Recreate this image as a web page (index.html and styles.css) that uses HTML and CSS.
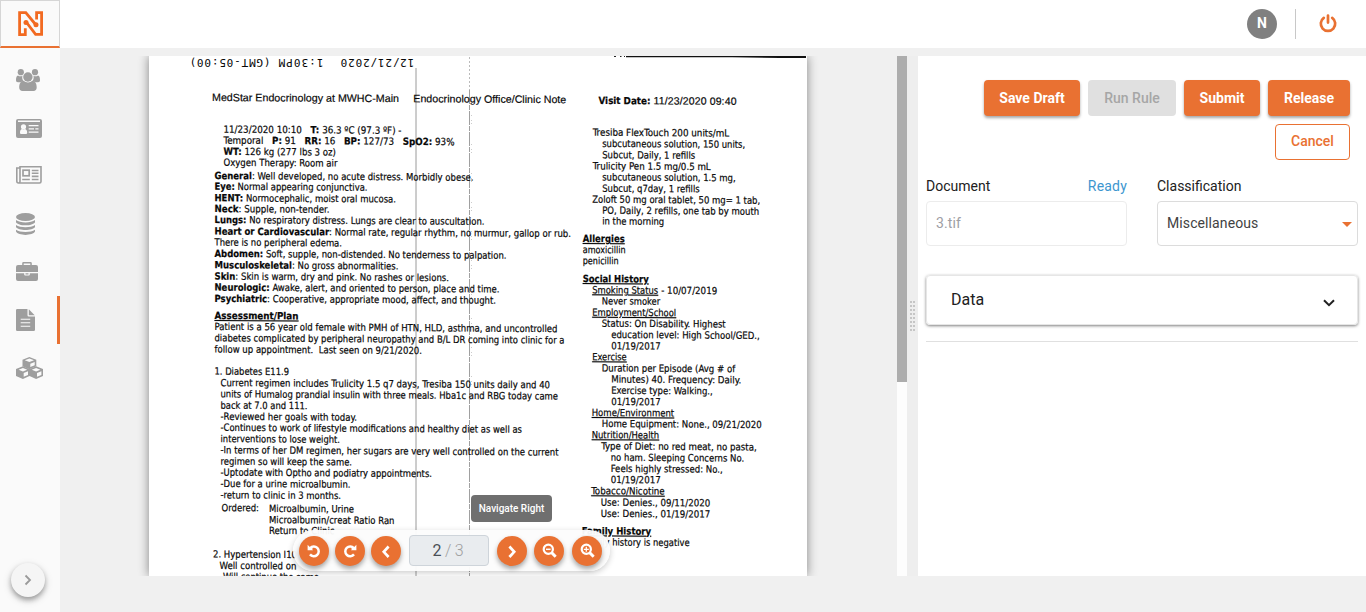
FILE: index.html
```html
<!DOCTYPE html>
<html lang="en">
<head>
<meta charset="utf-8">
<title>Document review</title>
<link rel="stylesheet" href="styles.css">
</head>
<body>
<div class="app">
  <nav class="sidebar">
    <a class="logo">
      <svg width="26" height="26" viewBox="0 0 26 26" fill="none" stroke="#f26a21" stroke-width="2.800">
        <path d="M7.800 10.500 17.600 23.400H23.600V1.600H18.600V8.400M7.300 17.200V23.600H1.600V1.600H7.800L18 14"/>
        <circle cx="8" cy="11.500" r="2.500" fill="#f26a21" stroke="none"/>
        <circle cx="18" cy="13.800" r="2.500" fill="#f26a21" stroke="none"/>
      </svg>
    </a>
    <a class="nav-item">
      <svg width="24" height="22" viewBox="0 0 24 22" fill="#9e9e9e">
        <circle cx="4.800" cy="3.200" r="3.100"/><circle cx="19" cy="3.200" r="3.100"/>
        <path d="M2 6.500C3.500 7.600 5 7.600 6.400 6.800 5.900 9.200 6.500 11 7.700 12.400 6.200 12.500 5.200 12.900 4.400 13.200H2C.6 13.200 0 12.400 0 11.200 0 9 .5 6.500 2 6.500ZM22 6.500C20.500 7.600 19 7.600 17.500 6.800 18 9.200 17.400 11 16.200 12.400 17.700 12.500 18.700 12.900 19.500 13.200H22C23.400 13.200 24 12.400 24 11.200 24 9 23.500 6.500 22 6.500Z"/>
        <circle cx="11.900" cy="8" r="4.700"/>
        <path d="M7.700 11.800C10.200 14 13.800 14 16.200 11.800 19.500 12 20.700 15 20.700 18.600 20.700 20.800 19.400 22 17.500 22H6.500C4.500 22 3.200 20.800 3.200 18.600 3.200 15 4.500 12 7.700 11.800Z"/>
      </svg>
    </a>
    <a class="nav-item">
      <svg width="26" height="19" viewBox="0 0 26 19">
        <rect width="26" height="19" rx="2" fill="#9e9e9e"/>
        <path d="M2 1.500H24V3H2ZM4 13.500C4 11 5 10.200 6.200 10 7 10.600 8 10.600 8.800 10 10 10.200 11.200 11 11.200 13.500 11.200 14.700 10.500 15 9.500 15H5.500C4.500 15 4 14.700 4 13.500ZM12.700 6H22.500V7.200H12.700ZM12.700 9.300H18V10.500H12.700ZM19.300 9.300H22.500V10.500H19.300ZM12.700 12.600H22.500V13.800H12.700Z" fill="#fafafa"/>
        <circle cx="7.500" cy="7.800" r="2.600" fill="#fafafa"/>
      </svg>
    </a>
    <a class="nav-item news">
      <svg width="26" height="18" viewBox="0 0 26 18" fill="none" stroke="#9e9e9e" stroke-width="1.600">
        <path d="M4 2H.8V15C.8 16.500 1.600 17 2.500 17 3.500 17 4 16.400 4 15.500V.8H25V15.500C25 16.500 24.300 17 23.500 17H2.500"/>
        <rect x="7" y="4.200" width="6.200" height="5.600" stroke-width="1.700"/>
        <path d="M15.800 4.500H22.500M15.800 7.300H22.500M15.800 10.400H22.500M6.200 13.500H13.800M15.800 13.500H22.500"/>
      </svg>
    </a>
    <a class="nav-item">
      <svg width="19" height="22" viewBox="0 0 19 22" fill="#9e9e9e">
        <ellipse cx="9.500" cy="4" rx="9.500" ry="4"/>
        <path d="M0 7C4 10.200 15 10.200 19 7V9.200C17 13.300 2 13.300 0 9.200ZM0 12C4 15 15 15 19 12V14C17 18 2 18 0 14ZM0 16.800C4 19.800 15 19.800 19 16.800V18.600C17 23 2 23 0 18.600Z"/>
      </svg>
    </a>
    <a class="nav-item case">
      <svg width="22" height="19" viewBox="0 0 22 19" fill="#9e9e9e">
        <path d="M6.200 3V1.300Q6.200 0 7.500 0H14.500Q15.800 0 15.800 1.300V3H20Q22 3 22 5V10H0V5Q0 3 2 3ZM7.700 3H14.300V1.500H7.700ZM0 11.300H8.200V12.500Q8.200 13.500 9.200 13.500H12.800Q13.800 13.500 13.800 12.500V11.300H22V17Q22 19 20 19H2Q0 19 0 17ZM9.500 11.300H12.500V12.400H9.500Z" fill-rule="evenodd"/>
      </svg>
    </a>
    <a class="nav-item active">
      <svg width="19" height="22" viewBox="0 0 19 22">
        <path d="M1.300 0H11.500V6.200Q11.500 7.500 12.800 7.500H19V20.700Q19 22 17.700 22H1.300Q0 22 0 20.700V1.300Q0 0 1.300 0ZM12.800 .3 18.700 6.200H12.800Z" fill="#9e9e9e"/>
        <path d="M4.700 10.200H14.200M4.700 13.800H14.200M4.700 17.300H14.200" stroke="#fafafa" stroke-width="1.100"/>
      </svg>
    </a>
    <a class="nav-item">
      <svg width="27" height="22" viewBox="0 0 27 22" fill="#9e9e9e">
        <path d="M13.400 0 20.300 2.700V9.200L13.400 12.200 6.500 9.200V2.700Z"/>
        <path d="M6.900 9.300 13.500 12V19L6.900 22 0 19V12ZM20.100 9.300 27 12V19L20.100 22 13.500 19V12Z"/>
        <path d="M13.400 1.500 18 3.300 13.400 5 8.800 3.300ZM14.300 6.700 18.700 5V8.200L14.300 10ZM6.900 11 11.200 12.700 6.900 14.500 2.600 12.700ZM7.700 16 12 14.300V17.900L7.700 19.800ZM20.100 11 24.400 12.700 20.100 14.500 15.800 12.700ZM21 16 25.400 14.300V17.900L21 19.800Z" fill="#fafafa"/>
      </svg>
    </a>
    <button class="expand">
      <svg width="8" height="12" viewBox="0 0 8 12" fill="none" stroke="#9a9a9a" stroke-width="1.800"><path d="M1.500 1.500 6 6 1.500 10.500"/></svg>
    </button>
  </nav>

  <div class="main">
    <header class="topbar">
      <span class="avatar">N</span>
      <span class="divider"></span>
      <svg class="power" width="18" height="19" viewBox="0 0 18 19" fill="none" stroke="#e97132" stroke-width="2.700" stroke-linecap="round">
        <path d="M9 1.500V8.600M4.800 3.900A7.200 7.200 0 1 0 13.200 3.900"/>
      </svg>
    </header>

    <div class="workspace">
      <section class="viewer">
        <svg class="scan" width="658" height="520" viewBox="149 56 658 520">
          <path d="M614 56.500h2M620 56.500h1.500M624 56.500h1" stroke="#222"/>
          <path d="M626 56H806V58H780L732 57.300H626Z" fill="#111"/>
          <path d="M416 68V576" stroke="#9a9a9a"/>
          <path d="M469.500 57V90" stroke="#bbb" stroke-dasharray="2 2"/>
          <path d="M469.500 90V576" stroke="#a0a0a0" stroke-dasharray="14 1 5 1"/>
          <path d="M471.500 115V400" stroke="#ccc" stroke-dasharray="1 4 1 2 1 20"/>

          <g class="fax">
            <text transform="translate(414.300 59.300) rotate(180)" textLength="73.600">12/21/2020</text>
            <text transform="translate(323.500 59) rotate(180)" textLength="45">1:30PM</text>
            <text transform="translate(270.500 58.700) rotate(180)" textLength="81">(GMT-05:00)</text>
          </g>

          <g class="head" transform="translate(212 -.5) skewY(.35)">
            <text x="0" y="101.500" textLength="187">MedStar Endocrinology at MWHC-Main</text>
            <text x="201.300" y="101.500" textLength="153">Endocrinology Office/Clinic Note</text>
          </g>
          <g class="note" transform="translate(598.500 0) skewY(.35)">
            <text x="0" y="104" class="b" textLength="52" lengthAdjust="spacingAndGlyphs">Visit Date:</text>
            <text x="55" y="104" class="arial" textLength="83">11/23/2020 09:40</text>
          </g>

          <g class="note" transform="translate(214.500 -.4) skewY(.38)">
            <text x="9" y="133" textLength="178" lengthAdjust="spacingAndGlyphs">11/23/2020 10:10 &#160;<tspan class="b"> T:</tspan> 36.3 ºC (97.3 ºF) -</text>
            <text x="9" y="144" textLength="231" lengthAdjust="spacingAndGlyphs">Temporal &#160;<tspan class="b"> P:</tspan> 91 &#160;<tspan class="b"> RR:</tspan> 16 &#160;<tspan class="b"> BP:</tspan> 127/73 &#160;<tspan class="b"> SpO2:</tspan> 93%</text>
            <text x="9" y="155.200" textLength="112.500" lengthAdjust="spacingAndGlyphs"><tspan class="b">WT:</tspan> 126 kg (277 lbs 3 oz)</text>
            <text x="9" y="166.200" textLength="114" lengthAdjust="spacingAndGlyphs">Oxygen Therapy: Room air</text>
            <text x="0" y="179.500" textLength="259" lengthAdjust="spacingAndGlyphs"><tspan class="b">General</tspan>: Well developed, no acute distress. Morbidly obese.</text>
            <text x="0" y="190.200" textLength="153" lengthAdjust="spacingAndGlyphs"><tspan class="b">Eye:</tspan> Normal appearing conjunctiva.</text>
            <text x="0" y="201.700" textLength="181.500" lengthAdjust="spacingAndGlyphs"><tspan class="b">HENT:</tspan> Normocephalic, moist oral mucosa.</text>
            <text x="0" y="212.500" textLength="115" lengthAdjust="spacingAndGlyphs"><tspan class="b">Neck</tspan>: Supple, non-tender.</text>
            <text x="0" y="223.500" textLength="270" lengthAdjust="spacingAndGlyphs"><tspan class="b">Lungs:</tspan> No respiratory distress. Lungs are clear to auscultation.</text>
            <text x="0" y="235" textLength="356.500" lengthAdjust="spacingAndGlyphs"><tspan class="b">Heart or Cardiovascular</tspan>: Normal rate, regular rhythm, no murmur, gallop or rub.</text>
            <text x="0" y="246" textLength="127.500" lengthAdjust="spacingAndGlyphs">There is no peripheral edema.</text>
            <text x="0" y="257.300" textLength="292" lengthAdjust="spacingAndGlyphs"><tspan class="b">Abdomen:</tspan> Soft, supple, non-distended. No tenderness to palpation.</text>
            <text x="0" y="268.700" textLength="184" lengthAdjust="spacingAndGlyphs"><tspan class="b">Musculoskeletal</tspan>: No gross abnormalities.</text>
            <text x="0" y="280" textLength="234.500" lengthAdjust="spacingAndGlyphs"><tspan class="b">Skin</tspan>: Skin is warm, dry and pink. No rashes or lesions.</text>
            <text x="0" y="291" textLength="285" lengthAdjust="spacingAndGlyphs"><tspan class="b">Neurologic:</tspan> Awake, alert, and oriented to person, place and time.</text>
            <text x="0" y="302.300" textLength="281.500" lengthAdjust="spacingAndGlyphs"><tspan class="b">Psychiatric</tspan>: Cooperative, appropriate mood, affect, and thought.</text>
            <text x="0" y="319.300" class="b u" textLength="84" lengthAdjust="spacingAndGlyphs">Assessment/Plan</text>
            <text x="0" y="330.300" textLength="343" lengthAdjust="spacingAndGlyphs">Patient is a 56 year old female with PMH of HTN, HLD, asthma, and uncontrolled</text>
            <text x="0" y="341.700" textLength="350" lengthAdjust="spacingAndGlyphs">diabetes complicated by peripheral neuropathy and B/L DR coming into clinic for a</text>
            <text x="0" y="353" textLength="207.500" lengthAdjust="spacingAndGlyphs">follow up appointment. &#160;Last seen on 9/21/2020.</text>
            <text x="0" y="375" textLength="74.500" lengthAdjust="spacingAndGlyphs">1. Diabetes E11.9</text>
            <text x="6" y="386.500" textLength="329.500" lengthAdjust="spacingAndGlyphs">Current regimen includes Trulicity 1.5 q7 days, Tresiba 150 units daily and 40</text>
            <text x="6" y="397.700" textLength="337.500" lengthAdjust="spacingAndGlyphs">units of Humalog prandial insulin with three meals. Hba1c and RBG today came</text>
            <text x="6" y="409" textLength="87" lengthAdjust="spacingAndGlyphs">back at 7.0 and 111.</text>
            <text x="6" y="420.200" textLength="136.500" lengthAdjust="spacingAndGlyphs">-Reviewed her goals with today.</text>
            <text x="6" y="431.200" textLength="301.500" lengthAdjust="spacingAndGlyphs">-Continues to work of lifestyle modifications and healthy diet as well as</text>
            <text x="6" y="442.500" textLength="119.500" lengthAdjust="spacingAndGlyphs">interventions to lose weight.</text>
            <text x="6" y="453.700" textLength="338" lengthAdjust="spacingAndGlyphs">-In terms of her DM regimen, her sugars are very well controlled on the current</text>
            <text x="6" y="465" textLength="131.500" lengthAdjust="spacingAndGlyphs">regimen so will keep the same.</text>
            <text x="6" y="476" textLength="211.500" lengthAdjust="spacingAndGlyphs">-Uptodate with Optho and podiatry appointments.</text>
            <text x="6" y="487.300" textLength="130" lengthAdjust="spacingAndGlyphs">-Due for a urine microalbumin.</text>
            <text x="6" y="498.700" textLength="120.500" lengthAdjust="spacingAndGlyphs">-return to clinic in 3 months.</text>
            <text x="7" y="511.500" textLength="37.500" lengthAdjust="spacingAndGlyphs">Ordered:</text>
            <text x="54.500" y="512" textLength="85" lengthAdjust="spacingAndGlyphs">Microalbumin, Urine</text>
            <text x="54.500" y="523.200" textLength="125.500" lengthAdjust="spacingAndGlyphs">Microalbumin/creat Ratio Ran</text>
            <text x="54.500" y="534" textLength="65.500" lengthAdjust="spacingAndGlyphs">Return to Clinic</text>
            <text x="-1.500" y="558" textLength="84" lengthAdjust="spacingAndGlyphs">2. Hypertension I10</text>
            <text x="5" y="569.300" textLength="77" lengthAdjust="spacingAndGlyphs">Well controlled on</text>
            <text x="8.500" y="580.300" textLength="96" lengthAdjust="spacingAndGlyphs">Will continue the same</text>
          </g>

          <g class="note" transform="translate(582.700 -.4) skewY(.38)">
            <text x="10" y="136" textLength="136.500" lengthAdjust="spacingAndGlyphs">Tresiba FlexTouch 200 units/mL</text>
            <text x="19.500" y="147.200" textLength="143" lengthAdjust="spacingAndGlyphs">subcutaneous solution, 150 units,</text>
            <text x="19.500" y="158.500" textLength="93" lengthAdjust="spacingAndGlyphs">Subcut, Daily, 1 refills</text>
            <text x="10" y="169.700" textLength="118" lengthAdjust="spacingAndGlyphs">Trulicity Pen 1.5 mg/0.5 mL</text>
            <text x="19.500" y="180.700" textLength="133.500" lengthAdjust="spacingAndGlyphs">subcutaneous solution, 1.5 mg,</text>
            <text x="19.500" y="192" textLength="97.500" lengthAdjust="spacingAndGlyphs">Subcut, q7day, 1 refills</text>
            <text x="9.500" y="203" textLength="168" lengthAdjust="spacingAndGlyphs">Zoloft 50 mg oral tablet, 50 mg= 1 tab,</text>
            <text x="19.500" y="214" textLength="157" lengthAdjust="spacingAndGlyphs">PO, Daily, 2 refills, one tab by mouth</text>
            <text x="19.500" y="224.800" textLength="62" lengthAdjust="spacingAndGlyphs">in the morning</text>
            <text x="0" y="242.300" class="b u" textLength="42" lengthAdjust="spacingAndGlyphs">Allergies</text>
            <text x="0" y="253.500" textLength="43" lengthAdjust="spacingAndGlyphs">amoxicillin</text>
            <text x="0" y="264.500" textLength="36" lengthAdjust="spacingAndGlyphs">penicillin</text>
            <text x="0" y="282.500" class="b u" textLength="66" lengthAdjust="spacingAndGlyphs">Social History</text>
            <text x="9.500" y="293.700" class="u" textLength="66" lengthAdjust="spacingAndGlyphs">Smoking Status</text>
            <text x="78.500" y="293.700" textLength="56" lengthAdjust="spacingAndGlyphs">- 10/07/2019</text>
            <text x="19" y="304.700" textLength="58.500" lengthAdjust="spacingAndGlyphs">Never smoker</text>
            <text x="9.500" y="316" class="u" textLength="84" lengthAdjust="spacingAndGlyphs">Employment/School</text>
            <text x="19" y="327" textLength="124" lengthAdjust="spacingAndGlyphs">Status: On Disability. Highest</text>
            <text x="28.500" y="338.200" textLength="148.500" lengthAdjust="spacingAndGlyphs">education level: High School/GED.,</text>
            <text x="28.500" y="349.500" textLength="49.500" lengthAdjust="spacingAndGlyphs">01/19/2017</text>
            <text x="9.500" y="360.500" class="u" textLength="34.500" lengthAdjust="spacingAndGlyphs">Exercise</text>
            <text x="19" y="371.700" textLength="133.500" lengthAdjust="spacingAndGlyphs">Duration per Episode (Avg # of</text>
            <text x="28.500" y="382.800" textLength="130" lengthAdjust="spacingAndGlyphs">Minutes) 40. Frequency: Daily.</text>
            <text x="28.500" y="394" textLength="101.500" lengthAdjust="spacingAndGlyphs">Exercise type: Walking.,</text>
            <text x="28.500" y="405.200" textLength="49.500" lengthAdjust="spacingAndGlyphs">01/19/2017</text>
            <text x="9" y="416.300" class="u" textLength="82.500" lengthAdjust="spacingAndGlyphs">Home/Environment</text>
            <text x="19" y="427.300" textLength="160" lengthAdjust="spacingAndGlyphs">Home Equipment: None., 09/21/2020</text>
            <text x="9" y="438.500" class="u" textLength="67.500" lengthAdjust="spacingAndGlyphs">Nutrition/Health</text>
            <text x="18.500" y="449.700" textLength="155.500" lengthAdjust="spacingAndGlyphs">Type of Diet: no red meat, no pasta,</text>
            <text x="28" y="461" textLength="133.500" lengthAdjust="spacingAndGlyphs">no ham. Sleeping Concerns No.</text>
            <text x="28" y="472.200" textLength="112" lengthAdjust="spacingAndGlyphs">Feels highly stressed: No.,</text>
            <text x="28" y="483.300" textLength="50" lengthAdjust="spacingAndGlyphs">01/19/2017</text>
            <text x="8.500" y="494.500" class="u" textLength="73.500" lengthAdjust="spacingAndGlyphs">Tobacco/Nicotine</text>
            <text x="18" y="506" textLength="109.500" lengthAdjust="spacingAndGlyphs">Use: Denies., 09/11/2020</text>
            <text x="18" y="517.200" textLength="109.500" lengthAdjust="spacingAndGlyphs">Use: Denies., 01/19/2017</text>
            <text x="-1" y="534.700" class="b u" textLength="69.500" lengthAdjust="spacingAndGlyphs">Family History</text>
            <text x="0" y="545.800" textLength="107" lengthAdjust="spacingAndGlyphs">Family history is negative</text>
          </g>
        </svg>

        <div class="toolbar">
          <button class="round"><svg width="14" height="14" viewBox="0 0 14 14" fill="none" stroke="#fff" stroke-width="2.500"><path d="M2.800 4.300H5.500M3.200 4A4.900 4.900 0 1 1 3 10.400"/><path d="M.6 .8V6.200H6Z" fill="#fff" stroke="none"/></svg></button>
          <button class="round"><svg width="14" height="14" viewBox="0 0 14 14" fill="none" stroke="#fff" stroke-width="2.500"><path d="M11.200 4.300H8.500M10.800 4A4.900 4.900 0 1 0 11 10.400"/><path d="M13.400 .8V6.200H8Z" fill="#fff" stroke="none"/></svg></button>
          <button class="round"><svg width="10" height="14" viewBox="0 0 10 14" fill="none" stroke="#fff" stroke-width="2.700"><path d="M7.600 2.500 2.800 7.800 7.600 13"/></svg></button>
          <div class="pager"><span class="current">2</span> / 3</div>
          <button class="round"><svg width="10" height="14" viewBox="0 0 10 14" fill="none" stroke="#fff" stroke-width="2.700"><path d="M2.400 2.500 7.200 7.800 2.400 13"/></svg><span class="tooltip">Navigate Right</span></button>
          <button class="round zoom-out"><svg width="15" height="15" viewBox="0 0 15 15" fill="none" stroke="#fff"><circle cx="6.300" cy="6.300" r="4.600" stroke-width="2.200"/><path d="M9.600 9.600 13.700 13.700" stroke-width="2.900"/><path d="M4 6.300H8.600" stroke-width="1.500"/></svg></button>
          <button class="round zoom-in"><svg width="15" height="15" viewBox="0 0 15 15" fill="none" stroke="#fff"><circle cx="6.300" cy="6.300" r="4.600" stroke-width="2.200"/><path d="M9.600 9.600 13.700 13.700" stroke-width="2.900"/><path d="M3.800 6.300H8.800M6.300 3.800V8.800" stroke-width="1.300"/></svg></button>
        </div>
      </section>

      <div class="scrollbar"><div class="thumb"></div></div>
      <div class="gutter"><div class="grip"></div></div>

      <section class="panel">
        <div class="actions">
          <button class="btn save">Save Draft</button>
          <button class="btn run" disabled>Run Rule</button>
          <button class="btn submit">Submit</button>
          <button class="btn release">Release</button>
          <button class="btn cancel">Cancel</button>
        </div>
        <div class="fields">
          <div class="field">
            <div class="label doc"><span>Document</span><span class="ready">Ready</span></div>
            <div class="box disabled">3.tif</div>
          </div>
          <div class="field">
            <div class="label">Classification</div>
            <div class="box select">Miscellaneous<i class="caret"></i></div>
          </div>
        </div>
        <div class="accordion">
          <span>Data</span>
          <svg width="12" height="8" viewBox="0 0 12 8" fill="none" stroke="#212121" stroke-width="2"><path d="M1 1.200 6 6.200 11 1.200"/></svg>
        </div>
        <div class="rule"></div>
      </section>
    </div>
  </div>
</div>
</body>
</html>
```
FILE: styles.css
```css
* { box-sizing: border-box; }
body { margin: 0; font-family: Roboto, "Liberation Sans", sans-serif; background: #f0f0f0; color: #212121; }
button { font: inherit; border: 0; padding: 0; }

.app { display: flex; height: 612px; overflow: hidden; }

.sidebar { display: flex; flex-direction: column; width: 60px; background: #fafafa; }
.logo { display: flex; align-items: center; justify-content: center; height: 48px; flex: none; border: 1px solid #d6d6d6; border-bottom: 2px solid #e97132; padding: 1px 0 0 1px; margin-bottom: 8px; }
.nav-item { display: flex; align-items: center; height: 48px; flex: none; padding-left: 16px; }
.nav-item.active { border-right: 3px solid #e97132; }
.nav-item.news, .nav-item.case { padding-bottom: 2px; }
.nav-item svg { display: block; }
.expand { display: flex; align-items: center; justify-content: center; width: 34px; height: 34px; margin: auto 0 15px 11px; border-radius: 50%; background: #f5f5f5; box-shadow: 0 3px 5px rgba(0,0,0,.3), 0 3px 10px rgba(0,0,0,.14); }

.main { flex: 1; display: flex; flex-direction: column; min-width: 0; }
.topbar { display: flex; align-items: center; justify-content: flex-end; height: 48px; background: #fff; padding-right: 29px; }
.avatar { width: 30px; height: 30px; border-radius: 50%; background: #808080; color: #fff; font-size: 14px; font-weight: 700; line-height: 29px; text-align: center; }
.divider { width: 1px; height: 30px; background: #c8c8c8; margin: 0 23px 0 18px; }
.power { margin-bottom: 1px; }

.workspace { display: flex; height: 520px; margin-top: 8px; }
.viewer { position: relative; width: 837px; overflow: hidden; display: flex; padding-left: 89px; }
.scan { display: block; flex: none; background: #fff; box-shadow: 0 0 10px rgba(0,0,0,.45); }
.scan text { white-space: pre; fill: #080808; }
.fax { font: 11px "DejaVu Sans Mono", monospace; }
.head { font: 10.700px "Liberation Sans", Arial, sans-serif; stroke: #080808; stroke-width: .18px; }
.note { font: 9.900px "DejaVu Sans Condensed", "DejaVu Sans", sans-serif; stroke: #080808; stroke-width: .2px; }
.note .b { font-weight: 700; }
.note .u { text-decoration: underline; }
.note .arial { font: 10.500px "Liberation Sans", Arial, sans-serif; }

.toolbar { position: absolute; left: 233px; bottom: 5px; display: flex; align-items: center; height: 41px; width: 317px; padding: 0 6px; gap: 6px; border-radius: 21px; background: rgba(252,252,252,.96); box-shadow: 0 2px 6px rgba(0,0,0,.2); }
.round { position: relative; display: flex; align-items: center; justify-content: center; flex: none; width: 30px; height: 30px; border-radius: 50%; background: #e97132; box-shadow: 0 3px 5px rgba(0,0,0,.35); }
.zoom-out { margin-left: 1px; }
.zoom-in { margin-left: 2px; }
.pager { width: 80px; height: 31px; flex: none; margin: 0 2px; padding-right: 2px; border: 1px solid #ced4da; border-radius: 4px; background: #e9ecef; color: #9f9f9f; font-size: 16px; font-weight: 300; line-height: 29px; letter-spacing: -.2px; text-align: center; }
.current { color: #495057; font-weight: 400; }
.tooltip { position: absolute; left: -26px; bottom: 44px; width: 81px; height: 27px; border-radius: 4px; background: #6f6f6f; color: #fff; font-size: 10px; font-weight: 500; line-height: 27px; text-align: center; white-space: nowrap; }

.scrollbar { width: 10px; background: #fdfdfd; }
.thumb { height: 326px; background: #adadad; }
.gutter { display: flex; align-items: center; justify-content: center; width: 11px; background: #eee; }
.grip { width: 5px; height: 30px; background: repeating-linear-gradient(#0000 0 2px, #eee 2px 4px), linear-gradient(90deg, #c6c6c6 2px, #eee 2px 3px, #c6c6c6 3px); }

.panel { flex: 1; min-width: 0; background: #fff; padding: 24px 8px 0; }
.actions { display: flex; flex-wrap: wrap; justify-content: flex-end; gap: 8px; padding-right: 8px; }
.btn { height: 36px; padding-bottom: 1px; border-radius: 4px; background: #e97132; color: #fff; font-size: 14px; font-weight: 700; line-height: 34px; box-shadow: 0 2px 3px rgba(0,0,0,.35); }
.save { width: 96px; }
.run { width: 88px; background: #e0e0e0; color: #a6a6a6; font-weight: 500; box-shadow: none; }
.submit { width: 76px; }
.release { width: 82px; }
.cancel { width: 75px; padding-bottom: 2px; background: #fff; border: 1px solid #e97132; color: #e97132; font-weight: 500; line-height: 32px; box-shadow: none; }
.fields { display: flex; justify-content: space-between; margin-top: 17px; }
.field { width: 201px; }
.label { height: 24px; font-size: 14px; line-height: 19px; letter-spacing: 0; }
.doc { display: flex; justify-content: space-between; }
.ready { color: #3d96cf; letter-spacing: .2px; }
.box { display: flex; align-items: center; height: 45px; padding: 0 9px 1px; border: 1px solid #dcdcdc; border-radius: 4px; font-size: 14px; letter-spacing: .1px; color: #424242; }
.box.disabled { border-color: #ececec; color: #9e9ea4; }
.select { justify-content: space-between; padding-right: 5px; }
.caret { border: 5px solid transparent; border-top-color: #e97132; border-bottom: 0; margin-top: 3px; }
.accordion { display: flex; align-items: center; justify-content: space-between; height: 50px; margin-top: 29px; padding: 0 22px 1px 24px; border: 1px solid #e6e6e6; border-radius: 4px; box-shadow: 0 1px 3px rgba(0,0,0,.5); font-size: 16px; }
.accordion svg { margin-top: 6px; }
.rule { height: 1px; margin-top: 16px; background: #e0e0e0; }
```
